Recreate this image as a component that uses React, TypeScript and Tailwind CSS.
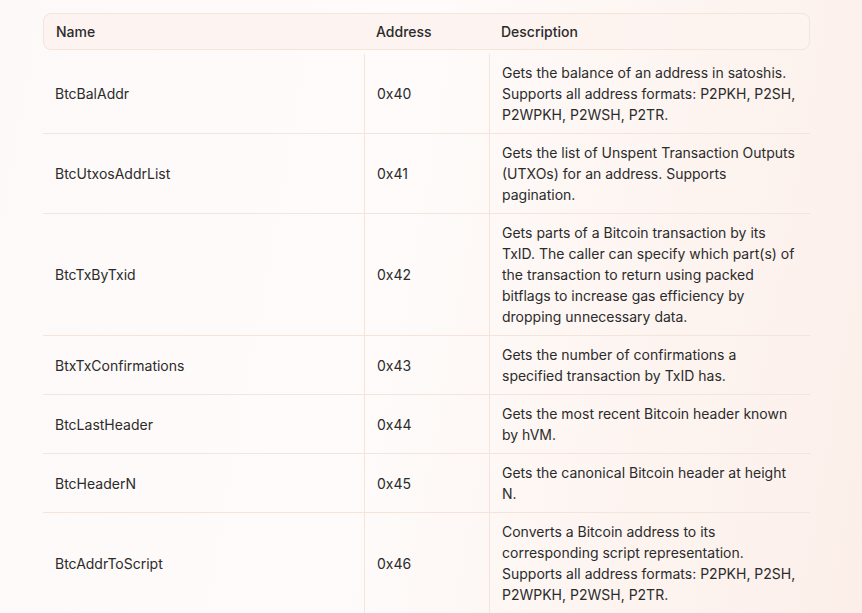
const rows = [
  {
    name: "BtcBalAddr",
    address: "0x40",
    description:
      "Gets the balance of an address in satoshis. Supports all address formats: P2PKH, P2SH, P2WPKH, P2WSH, P2TR.",
  },
  {
    name: "BtcUtxosAddrList",
    address: "0x41",
    description:
      "Gets the list of Unspent Transaction Outputs (UTXOs) for an address. Supports pagination.",
  },
  {
    name: "BtcTxByTxid",
    address: "0x42",
    description:
      "Gets parts of a Bitcoin transaction by its TxID. The caller can specify which part(s) of the transaction to return using packed bitflags to increase gas efficiency by dropping unnecessary data.",
  },
  {
    name: "BtxTxConfirmations",
    address: "0x43",
    description:
      "Gets the number of confirmations a specified transaction by TxID has.",
  },
  {
    name: "BtcLastHeader",
    address: "0x44",
    description: "Gets the most recent Bitcoin header known by hVM.",
  },
  {
    name: "BtcHeaderN",
    address: "0x45",
    description: "Gets the canonical Bitcoin header at height N.",
  },
  {
    name: "BtcAddrToScript",
    address: "0x46",
    description:
      "Converts a Bitcoin address to its corresponding script representation. Supports all address formats: P2PKH, P2SH, P2WPKH, P2WSH, P2TR.",
  },
];

export default function App() {
  return (
    <div className="min-h-[613px] h-[613px] overflow-hidden bg-[linear-gradient(100deg,#fdf9f8_0%,#fefbfa_45%,#fdf4f0_75%,#fcefea_100%)] pt-[13px] font-['Inter',sans-serif] text-[14px] leading-[21px] text-[#2b2b2b]">
      <div className="ml-[43px] w-[767px]">
        <div className="grid grid-cols-[320px_125px_320px] rounded-lg border border-[#f5e4da] bg-[#fdf3ef]/80 py-[7px] font-medium">
          <div className="px-3">Name</div>
          <div className="px-3">Address</div>
          <div className="px-3">Description</div>
        </div>

        <div className="mt-[4px]">
          {rows.map((row) => (
            <div
              key={row.address}
              className="grid grid-cols-[321px_125px_321px] border-b border-[#f5e4da]"
            >
              <div className="flex items-center px-3 py-2">{row.name}</div>
              <div className="flex items-center border-l border-[#f5e4da] px-3 py-2">
                {row.address}
              </div>
              <div className="border-l border-[#f5e4da] px-3 py-2">
                {row.description}
              </div>
            </div>
          ))}
        </div>
      </div>
    </div>
  );
}
